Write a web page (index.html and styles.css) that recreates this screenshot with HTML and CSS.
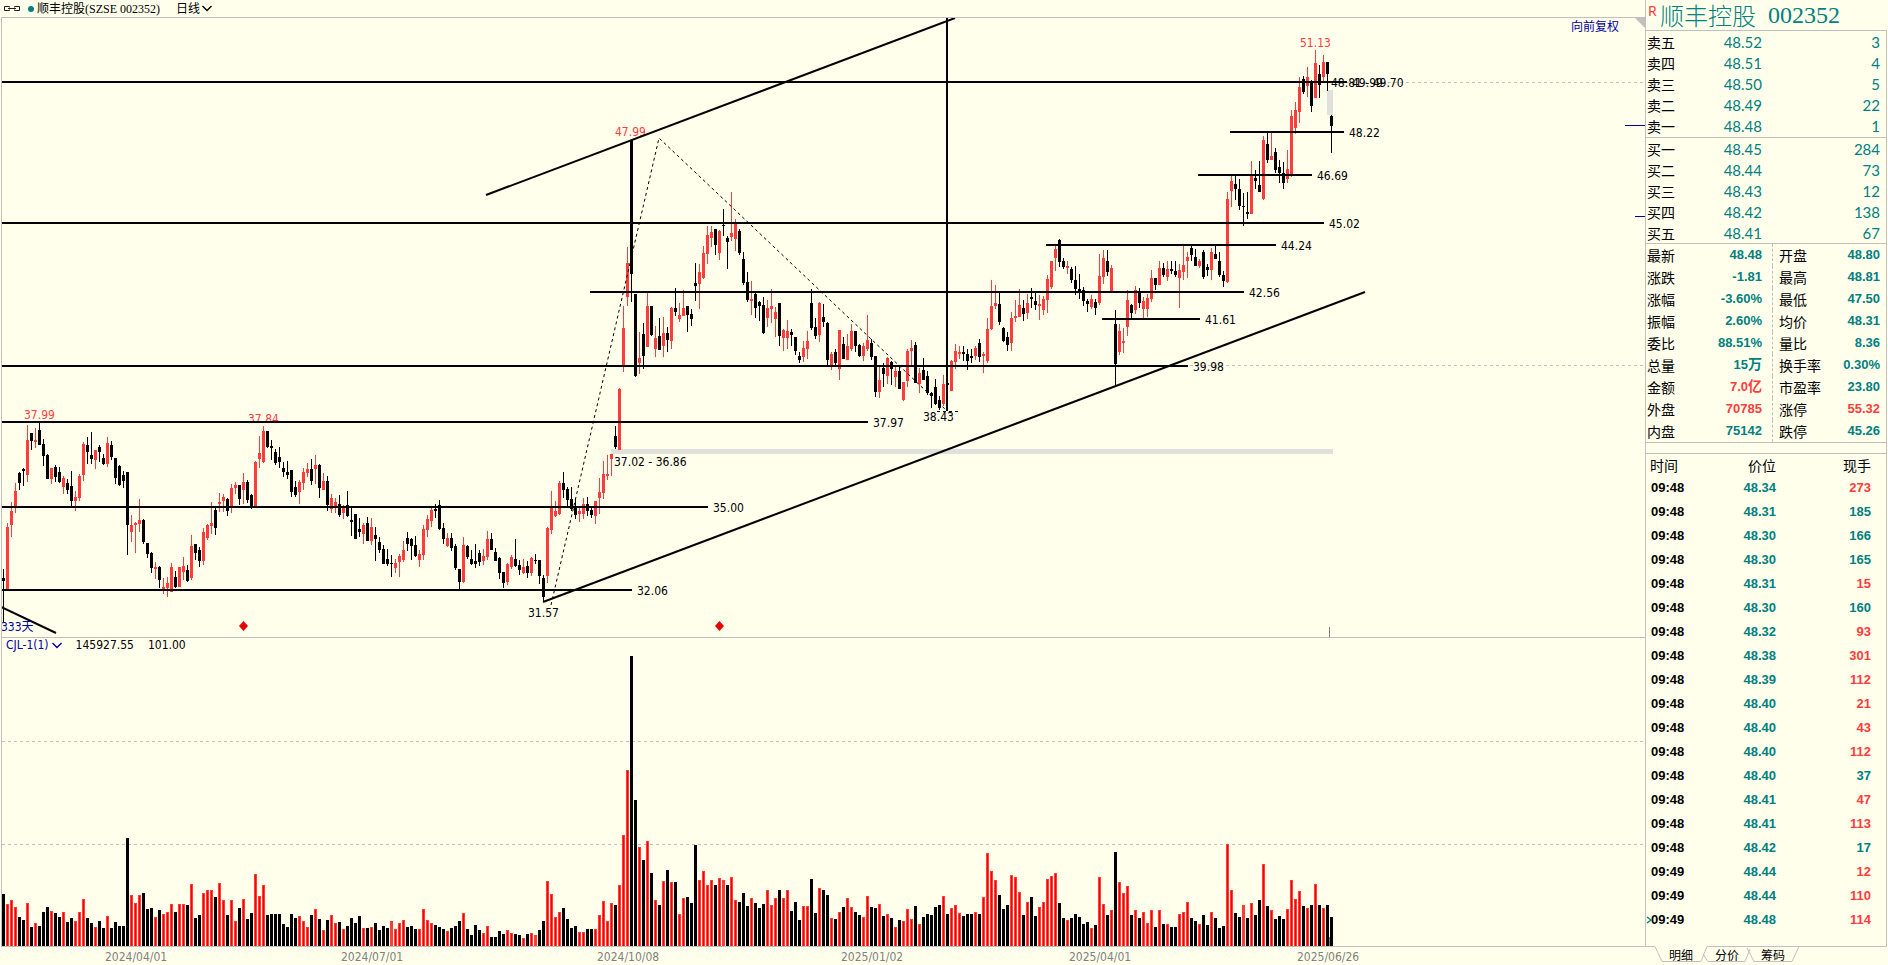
FILE: index.html
```html
<!DOCTYPE html>
<html lang="zh-CN">
<head>
<meta charset="utf-8">
<title>顺丰控股 002352</title>
<link rel="stylesheet" href="styles.css">
</head>
<body>
<div class="app">
  <main class="chart">
    <header class="toolbar">
      <svg class="link-icon" width="18" height="9" viewBox="0 0 18 9" aria-hidden="true"><path d="M6.500 3.500V2.500H1.500V6.500H6.500V5.500M11.500 3.500V2.500H16.500V6.500H11.500V5.500M5 4.500H13"/></svg>
      <span class="dot"></span>
      <h1 class="symbol">顺丰控股(SZSE 002352)</h1>
      <button class="period" type="button">日线<svg width="10" height="7" viewBox="0 0 10 7" aria-hidden="true"><path d="M.5 1L5 5.500L9.500 1"/></svg></button>
    </header>

    <section class="pane price-pane">
      <svg class="plot" id="price" width="100%" height="619">
        <g transform="translate(-2 -18)">
          <g class="grid"><path d="M2 82.500H4000M2 365.500H4000"/></g>
          <rect class="gap" x="611" y="449" width="722" height="5"/>
          <rect class="gap" x="1327" y="90" width="6" height="25"/>
          <g class="high">
            <text x="24" y="419">37.99</text>
            <text x="248" y="423">37.84</text>
            <text x="615" y="136">47.99</text>
            <text x="1300" y="47">51.13</text>
          </g>
          <g id="candles" class="crisp"></g>
          <g id="levels"></g>
          <g class="trend">
            <path d="M486 195L955 18"/>
            <path d="M543 602L1365 292"/>
            <path d="M1 607L56 633"/>
            <path d="M947 17V411"/>
          </g>
          <path class="wave" d="M551 605L659 138L946 410"/>
          <path class="wave" d="M937 411.500H958"/>
          <g class="label">
            <text x="1331" y="87">48.81 - 49.70</text>
            <text x="528" y="617">31.57</text>
            <text x="923" y="421">38.43</text>
            <text x="614" y="466">37.02 - 36.86</text>
          </g>
          <text class="days" x="1" y="631">333天</text>
          <path class="mark" d="M243.500 621L248 626L243.500 631L239 626ZM719.500 621L724 626L719.500 631L715 626Z"/>
          <path class="tick" d="M1329.500 627V637"/>
        </g>
      </svg>
      <button class="adjust" type="button">向前复权</button>
      <span class="corner"></span>
      <span class="pin pin-last"></span>
      <span class="pin pin-avg"></span>
    </section>

    <section class="pane volume-pane">
      <svg class="plot" id="volume" width="100%" height="308">
        <g transform="translate(-2 -638)">
          <g class="grid"><path d="M2 741.500H4000M2 844.500H4000"/></g>
          <g id="bars" class="crisp"></g>
          <path class="tick" d="M1329.500 937V946"/>
        </g>
      </svg>
      <div class="indicator">
        <button class="indicator-name" type="button">CJL-1(1)<svg width="10" height="7" viewBox="0 0 10 7" aria-hidden="true"><path d="M.5 1L5 5.500L9.500 1"/></svg></button>
        <span>145927.55</span>
        <span>101.00</span>
      </div>
    </section>

    <svg class="dates" width="100%" height="18">
      <text x="105" y="14">2024/04/01</text>
      <text x="341" y="14">2024/07/01</text>
      <text x="597" y="14">2024/10/08</text>
      <text x="841" y="14">2025/01/02</text>
      <text x="1069" y="14">2025/04/01</text>
      <text x="1297" y="14">2025/06/26</text>
    </svg>
  </main>

  <aside class="side">
    <h2 class="title"><sup class="flag">R</sup><span>顺丰控股</span><span class="code">002352</span></h2>
    <div class="quote">
      <table class="book asks">
        <tbody>
          <tr><th scope="row">卖五</th><td>48.52</td><td>3</td></tr>
          <tr><th scope="row">卖四</th><td>48.51</td><td>4</td></tr>
          <tr><th scope="row">卖三</th><td>48.50</td><td>5</td></tr>
          <tr><th scope="row">卖二</th><td>48.49</td><td>22</td></tr>
          <tr><th scope="row">卖一</th><td>48.48</td><td>1</td></tr>
        </tbody>
      </table>
      <table class="book">
        <tbody>
          <tr><th scope="row">买一</th><td>48.45</td><td>284</td></tr>
          <tr><th scope="row">买二</th><td>48.44</td><td>73</td></tr>
          <tr><th scope="row">买三</th><td>48.43</td><td>12</td></tr>
          <tr><th scope="row">买四</th><td>48.42</td><td>138</td></tr>
          <tr><th scope="row">买五</th><td>48.41</td><td>67</td></tr>
        </tbody>
      </table>
      <table class="stats">
        <tbody>
          <tr><th scope="row">最新</th><td>48.48</td><th scope="row">开盘</th><td>48.80</td></tr>
          <tr><th scope="row">涨跌</th><td>-1.81</td><th scope="row">最高</th><td>48.81</td></tr>
          <tr><th scope="row">涨幅</th><td>-3.60%</td><th scope="row">最低</th><td>47.50</td></tr>
          <tr><th scope="row">振幅</th><td>2.60%</td><th scope="row">均价</th><td>48.31</td></tr>
          <tr><th scope="row">委比</th><td>88.51%</td><th scope="row">量比</th><td>8.36</td></tr>
          <tr><th scope="row">总量</th><td>15<span class="unit">万</span></td><th scope="row">换手率</th><td>0.30%</td></tr>
          <tr><th scope="row">金额</th><td class="up">7.0<span class="unit">亿</span></td><th scope="row">市盈率</th><td>23.80</td></tr>
          <tr><th scope="row">外盘</th><td class="up">70785</td><th scope="row">涨停</th><td class="up">55.32</td></tr>
          <tr><th scope="row">内盘</th><td>75142</td><th scope="row">跌停</th><td>45.26</td></tr>
        </tbody>
      </table>
      <table class="trades">
        <thead><tr><th scope="col">时间</th><th scope="col">价位</th><th scope="col">现手</th></tr></thead>
        <tbody>
          <tr><td>09:48</td><td>48.34</td><td class="up">273</td></tr>
          <tr><td>09:48</td><td>48.31</td><td>185</td></tr>
          <tr><td>09:48</td><td>48.30</td><td>166</td></tr>
          <tr><td>09:48</td><td>48.30</td><td>165</td></tr>
          <tr><td>09:48</td><td>48.31</td><td class="up">15</td></tr>
          <tr><td>09:48</td><td>48.30</td><td>160</td></tr>
          <tr><td>09:48</td><td>48.32</td><td class="up">93</td></tr>
          <tr><td>09:48</td><td>48.38</td><td class="up">301</td></tr>
          <tr><td>09:48</td><td>48.39</td><td class="up">112</td></tr>
          <tr><td>09:48</td><td>48.40</td><td class="up">21</td></tr>
          <tr><td>09:48</td><td>48.40</td><td class="up">43</td></tr>
          <tr><td>09:48</td><td>48.40</td><td class="up">112</td></tr>
          <tr><td>09:48</td><td>48.40</td><td>37</td></tr>
          <tr><td>09:48</td><td>48.41</td><td class="up">47</td></tr>
          <tr><td>09:48</td><td>48.41</td><td class="up">113</td></tr>
          <tr><td>09:48</td><td>48.42</td><td>17</td></tr>
          <tr><td>09:49</td><td>48.44</td><td class="up">12</td></tr>
          <tr><td>09:49</td><td>48.44</td><td class="up">110</td></tr>
          <tr class="current"><td>09:49<svg class="caret" width="6" height="8" viewBox="0 0 6 8" aria-hidden="true"><path d="M1 1L5 4L1 7"/></svg></td><td>48.48</td><td class="up">114</td></tr>
        </tbody>
      </table>
    </div>
    <nav class="tabs">
      <svg class="tab-lines" width="160" height="17" viewBox="0 0 160 17" aria-hidden="true"><path class="open" d="M10 .5H62"/><path d="M10 .5L17 15.500H56L62 .5M58 8L63 15.500H100L105 3M102 2L109 15.500H147L154 .5"/></svg>
      <button type="button">明细</button>
      <button type="button">分价</button>
      <button type="button">筹码</button>
    </nav>
  </aside>
</div>
<script src="chart.js"></script>
</body>
</html>
```

FILE: styles.css
```css
* { box-sizing: border-box; }

body {
  margin: 0;
  background: #ffffec;
  color: #000;
  font-family: "DejaVu Sans Condensed", "Noto Sans", "Noto Sans CJK SC", sans-serif;
  font-size: 12px;
}

button {
  margin: 0;
  padding: 0;
  border: 0;
  background: none;
  color: inherit;
  font: inherit;
}

.app { display: flex; min-height: 100vh; }
.chart { flex: 1; min-width: 0; }
.side { width: 243px; flex: none; }

.toolbar {
  display: flex;
  align-items: center;
  height: 17px;
  padding-left: 3px;
  font-family: "Liberation Serif", "Noto Sans CJK SC", serif;
}
.link-icon path { fill: none; stroke: #222; stroke-width: 1; }
.dot { width: 6px; height: 6px; margin: 1px 3px 0 7px; border-radius: 50%; background: #008080; }
.symbol { margin: 0; font-size: 12px; font-weight: 400; line-height: 16px; }
.period { display: flex; align-items: center; gap: 2px; margin-left: 16px; font-family: inherit; line-height: 16px; }
.period path, .indicator-name path { fill: none; stroke: currentColor; stroke-width: 1.4; }

.pane { position: relative; margin-left: 1px; border-top: 1px solid #c0c0c0; border-left: 1px solid #c0c0c0; }
.volume-pane { border-bottom: 1px solid #c0c0c0; }
.plot { display: block; }
.dates { display: block; fill: #808080; }

.crisp, .grid, .level, .gap, .tick { shape-rendering: crispEdges; }
.grid path { fill: none; stroke: #c0c0c0; stroke-dasharray: 3 3; }
.gap { fill: #e0e0dc; }
.rise { fill: #ff3c3c; }
.core { fill: #f00; }
.fall, .level { fill: #000; }
.high { fill: #ff3c3c; }
.trend path { fill: none; stroke: #000; stroke-width: 2; }
.wave { fill: none; stroke: #000; stroke-dasharray: 3 3; }
.days { fill: #0000a0; }
.mark { fill: #e60000; }
.tick { stroke: #808080; }

.adjust {
  position: absolute;
  top: 0;
  right: 26px;
  color: #0000a0;
  font-family: "Noto Sans CJK SC", sans-serif;
  line-height: 16px;
}
.corner {
  position: absolute;
  top: 0;
  right: 0;
  border-top: 10px solid #c0c0c0;
  border-left: 10px solid transparent;
}
.pin { position: absolute; right: 0; height: 1px; background: #0000a0; }
.pin-last { top: 107px; width: 20px; }
.pin-avg { top: 198px; width: 10px; }

.indicator { position: absolute; top: 0; left: 4px; display: flex; gap: 14px; line-height: 14px; }
.indicator-name { display: flex; align-items: center; gap: 3px; color: #0000a0; }

.side { display: flex; flex-direction: column; }
.title {
  display: flex;
  align-items: center;
  height: 30px;
  margin: 0;
  border-left: 1px solid #c0c0c0;
  color: #008080;
  font: 300 24px/30px "Noto Sans CJK SC", sans-serif;
}
.flag { align-self: flex-start; width: 14px; padding-left: 2px; color: #ff3c3c; font: 14px/22px "Noto Sans", sans-serif; }
.code { margin-left: 12px; font-family: "Liberation Serif", serif; font-weight: 400; }

.quote { height: 917px; margin-right: 1px; border: 1px solid #c0c0c0; }
table { width: 100%; border-collapse: separate; border-spacing: 0; table-layout: fixed; }
th, td { padding: 0; }
th { font: 14px/20px "Noto Sans CJK SC", sans-serif; text-align: left; }
td { color: #008080; text-align: right; }
td.up { color: #ff3c3c; }

.book { border-bottom: 1px solid #c0c0c0; }
.asks { padding-bottom: 1px; }
.book tr { height: 21px; }
.book th { width: 40px; padding-left: 1px; }
.book td { font: 15px/20px Lato, sans-serif; }
.book td:nth-child(2) { width: 76px; }
.book td:last-child { padding-right: 6px; }

.stats { border-bottom: 1px solid #c0c0c0; }
.stats tr { height: 22px; }
.stats th, .stats td { line-height: 20px; }
.stats th { width: 46px; padding-left: 1px; }
.stats td { font: bold 13px/20px "Liberation Sans", "Noto Sans CJK SC", sans-serif; }
.stats td:nth-child(2) { width: 80px; padding-right: 10px; }
.stats th:nth-child(3) { width: 56px; padding-left: 6px; border-left: 1px dashed #c0c0c0; }
.stats td:last-child { padding-right: 6px; }
.unit { font-size: 14px; line-height: 16px; }

.trades { margin-top: 10px; border-top: 1px solid #c0c0c0; }
.trades thead tr { height: 22px; }
.trades tbody tr { height: 24px; }
.trades th:first-child { width: 60px; padding-left: 4px; }
.trades th:nth-child(2) { width: 70px; text-align: right; }
.trades th:last-child { padding-right: 15px; text-align: right; }
.trades td { font: bold 13px/20px "Liberation Sans", sans-serif; }
.trades td:first-child { position: relative; padding-left: 5px; color: #000; text-align: left; }
.trades td:last-child { padding-right: 15px; }
.caret { position: absolute; top: 8px; left: 0; }
.caret path { fill: none; stroke: #008080; stroke-width: 1.4; }

.tabs { position: relative; display: flex; height: 18px; margin-top: -1px; padding-left: 13px; }
.tabs button { position: relative; width: 46px; font: 12px/16px "Noto Sans CJK SC", sans-serif; }
.tab-lines { position: absolute; top: 0; left: 0; }
.tab-lines path { fill: none; stroke: #c0c0c0; }
.tab-lines .open { stroke: #ffffec; }
```

FILE: chart.js
```js
// One entry per session: kind, high, body top, body bottom, low, volume height.
// r = rising, k = falling, d = unchanged.
const sessions = `
k 569 578 581 623 52|r 523 527 589 591 42|r 502 511 525 537 46|r 483 491 507 513 39|k 472 473 483 490 29
k 468 469 471 486 26|r 425 440 475 482 43|k 433 433 441 450 19|r 428 440 442 448 23|k 423 430 445 445 20
k 439 444 456 466 34|k 454 455 479 479 39|r 468 468 479 484 35|k 465 467 477 482 33|k 467 472 482 483 29
r 476 478 487 494 34|k 479 483 490 494 24|k 471 486 501 506 28|r 491 497 501 511 25|r 474 476 498 501 34
r 442 444 475 481 47|k 437 445 452 464 28|k 432 455 459 464 23|r 450 450 460 469 19|k 445 447 452 462 25
k 454 458 464 465 18|r 437 443 464 467 30|k 441 445 457 460 18|k 458 458 478 484 24|k 465 466 485 486 20
k 471 475 481 488 20|k 472 472 525 555 108|r 515 525 532 542 51|r 522 523 525 553 43|r 499 520 524 532 51
k 519 520 542 544 53|k 543 543 554 558 37|k 552 553 568 573 38|r 562 567 569 579 29|k 566 567 580 588 36
r 578 587 589 594 32|r 577 583 588 597 34|r 563 567 592 592 42|k 571 577 587 588 34|r 567 567 587 587 42
r 557 566 572 580 42|k 565 570 581 582 41|r 535 546 578 580 62|k 544 544 553 560 28|k 547 550 561 567 31
r 528 532 561 565 53|r 524 525 538 540 56|r 502 523 526 534 56|k 507 510 528 535 49|r 493 502 504 512 63
r 494 497 501 512 46|k 498 499 511 516 31|r 484 488 507 513 46|r 482 485 488 494 25|k 485 485 499 505 38
r 473 482 490 504 47|k 480 482 500 503 27|k 494 495 507 509 33|r 461 462 506 506 72|r 436 453 459 468 50
r 426 431 462 463 61|k 431 431 447 448 31|k 440 446 448 460 32|k 449 452 463 465 32|k 447 457 462 468 32
k 462 468 472 477 22|k 461 472 475 479 19|k 470 470 492 497 32|k 481 487 495 497 28|r 480 482 492 504 30
r 468 472 483 490 25|r 463 469 473 477 19|k 459 469 481 485 31|r 455 465 469 484 37|k 464 465 488 498 27
r 473 481 490 490 16|k 476 481 505 511 26|r 494 498 509 513 31|r 498 502 506 513 23|k 495 504 515 517 24
r 505 507 513 519 17|k 491 505 516 517 20|k 508 520 522 536 28|k 514 514 539 539 23|k 518 529 532 537 30
r 523 525 534 544 18|k 517 523 541 541 18|r 518 527 541 545 19|k 527 535 539 561 23|k 537 542 550 553 16
k 545 549 564 564 20|k 549 559 564 566 18|d 555 563 564 577 25|r 559 563 568 573 17|r 554 556 562 577 23
r 541 550 560 562 26|k 532 538 544 551 19|k 538 539 546 560 20|k 536 545 556 557 17|r 550 554 560 567 17
r 525 529 555 560 37|r 515 519 530 537 26|r 508 510 521 527 23|k 504 509 511 518 21|k 500 505 529 530 19
k 523 528 539 544 17|r 533 538 546 547 15|k 533 538 548 551 18|k 544 546 568 570 20|k 569 569 582 590 25
r 537 545 582 583 33|k 545 546 557 559 17|k 550 559 564 565 11|k 544 561 564 568 21|k 550 553 562 566 16
r 549 556 561 565 13|r 531 539 557 560 20|k 533 539 550 550 9|k 548 552 561 561 9|k 557 558 573 579 15
k 572 572 583 588 12|r 563 564 582 585 16|r 555 557 567 569 13|k 539 559 566 567 12|k 560 565 570 575 11
r 559 567 573 574 8|k 561 566 573 578 12|r 557 558 573 576 13|d 554 560 561 564 11|k 560 560 576 584 16
k 575 578 597 602 25|r 527 528 576 583 65|r 491 507 530 534 52|r 501 511 516 517 29|r 481 483 514 515 34
k 472 483 490 498 38|k 487 489 500 506 27|k 487 499 509 511 18|k 498 506 515 519 20|r 508 511 514 522 14
r 498 504 514 519 14|k 497 504 511 516 17|k 508 510 515 518 17|r 501 501 516 524 17|r 478 492 498 514 31
r 461 474 493 499 45|r 455 474 476 480 25|r 454 454 459 476 43|k 426 436 447 449 41|r 388 389 450 450 61
r 306 328 366 372 111|r 247 263 297 306 176|k 140 140 274 302 290|k 294 294 376 377 146|r 332 358 363 374 99
k 323 334 356 369 86|r 293 306 347 347 105|k 306 306 335 336 73|r 326 338 349 357 46|k 318 336 350 350 41
r 317 333 346 357 65|k 327 333 340 352 76|r 307 308 341 349 64|k 288 308 312 316 64|r 303 315 319 322 32
r 290 308 316 316 48|k 306 306 315 332 49|k 309 314 319 326 43|k 263 283 286 301 101|r 264 272 284 309 66
r 246 253 278 279 75|r 226 235 254 264 61|r 226 232 238 247 66|k 229 229 245 255 61|r 230 231 253 260 68
d 209 225 226 236 66|k 236 238 242 269 61|r 192 233 237 241 69|r 219 223 239 251 46|k 229 231 253 255 44
k 252 259 283 285 53|k 272 282 300 302 40|r 281 299 301 315 48|k 292 294 308 318 43|k 301 302 306 321 38
k 297 305 333 334 42|r 300 308 318 327 56|r 289 306 309 323 41|r 307 312 319 337 48|k 303 303 336 346 56
r 329 330 338 351 48|r 320 331 338 349 56|k 329 332 335 346 35|k 337 337 351 355 44|k 352 356 360 363 26
r 341 348 357 362 40|r 331 341 349 359 40|k 289 303 328 330 67|k 318 327 336 339 33|r 302 303 335 342 58
k 304 317 322 327 56|k 322 323 360 366 51|r 352 354 366 370 28|k 349 352 363 365 27|r 330 330 369 380 34
k 337 344 359 359 39|r 334 346 360 360 48|r 324 331 349 351 39|k 331 331 346 352 34|k 344 345 356 357 31
r 343 346 356 361 29|r 315 340 349 351 50|k 339 343 357 360 39|k 356 356 392 397 38|r 367 380 392 398 42
k 363 368 374 387 30|r 357 358 376 384 32|k 361 362 369 385 28|r 367 371 377 387 19|k 366 371 389 389 26
r 382 382 400 401 25|r 349 351 381 387 37|r 340 348 351 366 27|k 342 345 383 383 40|r 368 373 384 393 22
k 358 370 380 380 29|k 371 376 393 395 32|k 392 393 396 408 31|k 379 387 404 405 39|k 396 400 408 410 41
r 375 384 404 406 50|k 380 383 385 388 32|r 360 361 391 391 38|r 344 351 362 369 41|r 346 352 354 359 33
k 346 352 354 361 30|k 349 354 361 370 32|k 349 356 358 363 32|r 346 348 356 360 34|k 339 343 357 362 32
r 352 354 356 373 49|r 318 329 361 363 93|r 280 306 329 330 75|r 285 303 306 309 66|k 292 304 322 325 51
k 327 328 341 342 37|k 332 337 345 351 41|r 312 318 343 351 71|r 300 316 318 322 69|r 289 305 317 317 54
k 300 308 314 321 31|r 294 303 313 319 44|k 288 297 299 308 49|k 291 301 305 310 30|r 295 304 306 320 39
r 296 299 310 315 44|r 275 279 300 313 67|r 261 261 287 289 70|r 245 249 258 271 73|k 239 240 262 267 43
k 258 261 267 269 28|r 261 266 268 274 26|k 267 269 280 283 28|k 266 280 289 295 32|k 274 289 291 299 29
k 287 290 301 306 22|k 299 301 304 312 24|r 295 299 307 309 18|k 299 302 308 315 21|r 254 276 303 305 69
r 250 258 277 284 42|k 250 261 272 276 31|r 265 268 291 291 36|k 310 324 364 386 94|r 324 331 352 355 64
r 328 341 343 353 53|r 290 300 327 336 60|k 304 305 313 318 31|r 286 290 310 314 36|k 288 292 303 308 28
r 297 301 309 318 34|r 294 298 309 317 23|r 270 278 299 302 36|k 278 278 285 290 19|r 261 268 285 285 36
k 263 268 275 277 22|r 261 269 277 281 22|k 261 269 271 274 19|k 261 271 275 277 19|r 264 270 278 308 32
r 246 265 272 280 34|r 252 257 261 278 44|k 246 248 255 261 28|k 249 257 266 266 25|r 259 261 266 268 22
k 250 252 277 279 31|k 264 267 270 276 21|r 248 252 270 280 34|k 246 254 259 259 28|k 252 261 275 277 18
k 271 275 281 287 20|r 192 199 282 283 102|r 176 181 191 207 56|k 176 184 189 200 33|k 179 189 206 210 29
d 193 206 207 226 41|k 192 212 214 219 28|r 161 175 214 214 43|k 170 178 181 189 31|k 161 185 192 192 46
r 136 140 199 200 82|k 133 144 160 163 40|r 132 156 160 160 36|k 148 152 170 173 27|k 160 167 173 183 30
k 162 173 183 189 27|r 150 169 179 183 37|r 110 116 175 177 66|r 102 110 128 134 47|r 77 87 112 123 55
k 76 79 92 94 40|r 67 77 86 97 38|k 80 81 106 112 41|r 50 63 98 98 62|k 65 74 85 98 41
r 55 62 77 81 38|k 62 62 74 91 41|k 115 116 126 153 29
`.trim().split(/[|\n]/).map(entry => {
  const [kind, ...values] = entry.split(" ");
  return [kind, ...values.map(Number)];
});

// Horizontal levels: start, end, y, price.
const levels = [
  [1, 1347, 82, "49.99"], [1230, 1344, 132, "48.22"], [1198, 1312, 175, "46.69"],
  [1, 1324, 223, "45.02"], [1046, 1276, 245, "44.24"], [590, 1244, 292, "42.56"],
  [1102, 1200, 319, "41.61"], [1, 1188, 366, "39.98"], [1, 868, 422, "37.97"],
  [1, 708, 507, "35.00"], [1, 632, 590, "32.06"]
];

const STEP = 4;
const BASE = 946;
const rect = (x, y, width, height, name) =>
  `<rect class="${name}" x="${x}" y="${y}" width="${width}" height="${height}"/>`;

let candles = "";
let bars = "";
sessions.forEach(([kind, high, top, bottom, low, volume], i) => {
  const x = 2 + STEP * i;
  const name = kind === "r" ? "rise" : "fall";
  candles += rect(x + 1, high, 1, low - high, name) + rect(x, top, 3, bottom - top, name);
  bars += rect(x, BASE - volume, 3, volume, kind === "k" ? "fall" : "rise");
  if (kind === "r") bars += rect(x + 1, BASE - volume + 1, 1, volume - 1, "core");
});
document.getElementById("candles").innerHTML = candles;
document.getElementById("bars").innerHTML = bars;
document.getElementById("levels").innerHTML = levels.map(([start, end, y, price]) =>
  rect(start, y - 1, end - start, 2, "level") +
  `<text x="${end + 5}" y="${y + 5}">${price}</text>`).join("");
```
